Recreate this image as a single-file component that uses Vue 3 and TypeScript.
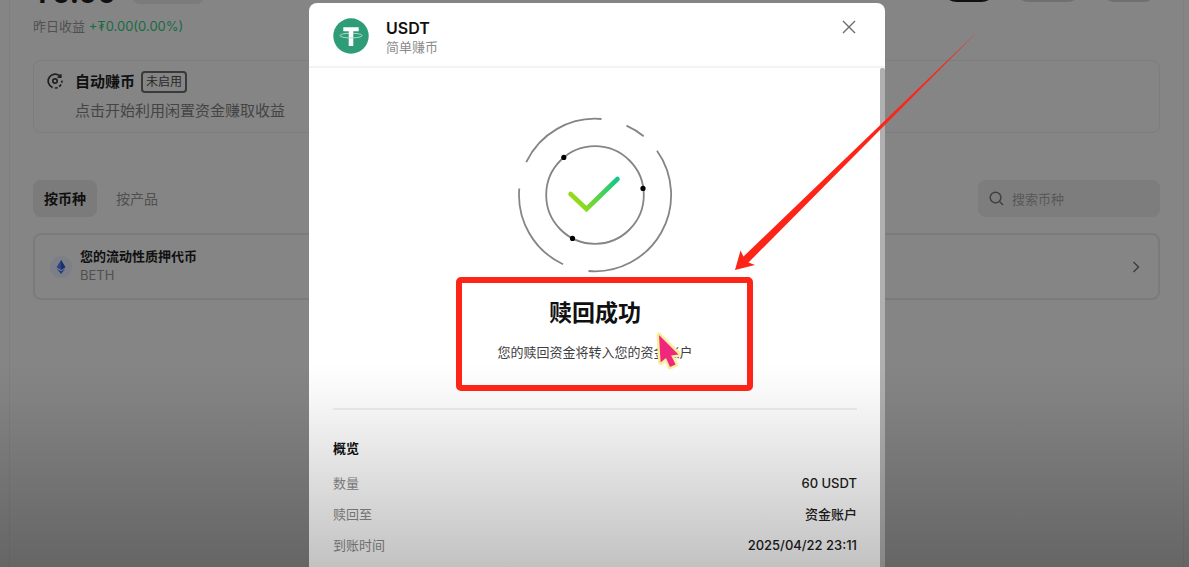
<script setup lang="ts">
import { ref } from 'vue'

interface DetailRow {
  label: string
  value: string
}

const keyword = ref('')
const activeTab = ref('coin')

const tabs = [
  { id: 'coin', label: '按币种' },
  { id: 'product', label: '按产品' },
]

const details: DetailRow[] = [
  { label: '数量', value: '60 USDT' },
  { label: '赎回至', value: '资金账户' },
  { label: '到账时间', value: '2025/04/22 23:11' },
]
</script>

<template>
  <div class="screen">
    <main class="page">
      <div class="balance">
        <strong class="amount">₮0.00</strong>
        <span class="unit"></span>
        <div class="actions">
          <button class="action primary" type="button" aria-label="申购"></button>
          <button class="action wide" type="button" aria-label="赎回"></button>
          <button class="action" type="button" aria-label="更多"></button>
        </div>
      </div>
      <p class="earned">昨日收益 <span class="gain">+₮0.00(0.00%)</span></p>

      <section class="card auto">
        <svg class="auto-icon" viewBox="0 0 16 16" aria-hidden="true">
          <path d="M13.4 3.4A7 7 0 1 0 5.6 14.6" />
          <path d="M7.8 15A7 7 0 0 0 14.9 7.6" stroke-dasharray="3 1.6" />
          <path d="M10.6 4.2h3.2v-3" />
          <circle cx="8" cy="8" r="2.2" />
        </svg>
        <div>
          <div class="auto-head">
            <h2>自动赚币</h2>
            <span class="badge">未启用</span>
          </div>
          <p class="auto-text">点击开始利用闲置资金赚取收益</p>
        </div>
      </section>

      <div class="toolbar">
        <div class="tabs">
          <button
            v-for="tab in tabs"
            :key="tab.id"
            type="button"
            class="tab"
            :class="{ active: tab.id === activeTab }"
            @click="activeTab = tab.id"
          >
            {{ tab.label }}
          </button>
        </div>
        <label class="search">
          <svg viewBox="0 0 16 16" aria-hidden="true">
            <circle cx="7" cy="7" r="5.7" />
            <path d="M11.2 11.2L15 15" />
          </svg>
          <input v-model="keyword" type="text" placeholder="搜索币种" aria-label="搜索币种" />
        </label>
      </div>

      <section class="card token">
        <svg class="eth" viewBox="0 0 24 24" aria-hidden="true">
          <circle cx="12" cy="12" r="11" fill="#7c7f86" />
          <path d="M12 5L16.4 12.3L12 15L7.6 12.3Z" fill="#2a4586" />
          <path d="M12 5L16.4 12.3L12 15Z" fill="#1b2f6b" />
          <path d="M7.8 13.7L12 16.2L16.2 13.7L12 19Z" fill="#1f3c86" />
        </svg>
        <div class="token-name">
          <h3>您的流动性质押代币</h3>
          <p>BETH</p>
        </div>
        <svg class="chevron" viewBox="0 0 8 12" aria-hidden="true">
          <path d="M1.5 1L6.5 6L1.5 11" />
        </svg>
      </section>
    </main>

    <div class="overlay">
      <section class="modal" role="dialog" aria-labelledby="modal-title">
        <header class="modal-head">
          <svg class="usdt" viewBox="0 0 36 36" aria-hidden="true">
            <circle cx="18" cy="18" r="17.7" fill="#2f9c78" />
            <path d="M10.3 9.3H25.7V13.3H20.3V28H15.7V13.3H10.3Z" fill="#fff" />
            <path
              d="M15.7 15.4C10.6 15.5 7 16.4 7 17.6C7 18.9 11.8 19.9 18 19.9S29 18.9 29 17.6C29 16.4 25.4 15.5 20.3 15.4"
              fill="none"
              stroke="#b5ddd0"
              stroke-width="1"
            />
          </svg>
          <div class="coin">
            <h1 id="modal-title">USDT</h1>
            <p>简单赚币</p>
          </div>
          <button class="close" type="button" aria-label="关闭">
            <svg viewBox="0 0 14 14" aria-hidden="true">
              <path d="M1 1L13 13M13 1L1 13" />
            </svg>
          </button>
        </header>

        <div class="modal-body">
          <div class="content">
            <svg class="success" viewBox="0 0 156 156" aria-hidden="true">
              <defs>
                <linearGradient id="tick" gradientUnits="userSpaceOnUse" x1="60" y1="92" x2="102" y2="62">
                  <stop offset="0" stop-color="#a0dc10" />
                  <stop offset="0.5" stop-color="#4fd44c" />
                  <stop offset="1" stop-color="#10c68c" />
                </linearGradient>
              </defs>
              <g fill="none" stroke="#858585" stroke-width="1.8">
                <path d="M9.2 45.2A76.3 76.3 0 0 1 84.5 2" />
                <path d="M109.5 8.6A76.3 76.3 0 0 1 126.7 19.3" />
                <path d="M140 33.7A76.3 76.3 0 0 1 71.5 154" />
                <path d="M46 147.2A76.3 76.3 0 0 1 2.3 71.5" />
                <circle cx="78" cy="78" r="48.8" />
              </g>
              <circle cx="46.8" cy="40.4" r="2.6" />
              <circle cx="126" cy="71.4" r="2.6" />
              <circle cx="55.5" cy="121.4" r="2.6" />
              <path
                d="M53.5 77L69.5 92L100.5 62"
                fill="none"
                stroke="url(#tick)"
                stroke-width="4.6"
                stroke-linecap="round"
              />
            </svg>
            <h2 class="result">赎回成功</h2>
            <p class="note">您的赎回资金将转入您的资金账户</p>
            <hr />
            <h3 class="overview">概览</h3>
            <dl class="details">
              <div v-for="row in details" :key="row.label" class="detail">
                <dt>{{ row.label }}</dt>
                <dd>{{ row.value }}</dd>
              </div>
            </dl>
          </div>
          <div class="scrollbar"></div>
        </div>
      </section>
    </div>

    <div class="shade"></div>

    <div class="overlay marks">
      <div class="mark-area">
        <div class="frame"></div>
        <svg class="arrow" viewBox="0 0 244 240" aria-hidden="true">
          <path d="M1 238L6.5 218.5L9.5 224.5L243 0L14.5 230.5L21 233Z" fill="#fc2517" />
        </svg>
        <svg class="cursor" viewBox="0 0 32 44" aria-hidden="true">
          <path
            d="M7 6L8.6 33.5L14 29L18 38L23.6 35.5L19.2 26.5L26.5 25.5Z"
            fill="#f0287c"
            stroke="#f8f0a0"
            stroke-width="5"
            stroke-linejoin="round"
            paint-order="stroke"
          />
        </svg>
      </div>
    </div>
  </div>
</template>

<style>
body {
  margin: 0;
  background: #858585;
}
</style>

<style scoped>
.screen {
  position: relative;
  height: 100vh;
  overflow: hidden;
  background: #858585;
  color: #101010;
  font-family: Inter, "Noto Sans CJK SC", sans-serif;
  font-size: 13px;
  line-height: 20px;
}

h1,
h2,
h3,
p,
dl,
dd {
  margin: 0;
}

button {
  padding: 0;
  border: 0;
  background: none;
  font: inherit;
  color: inherit;
}

.page {
  box-sizing: border-box;
  height: 100%;
  margin: 0 5px 0 9px;
  padding: 0 23px;
  border: solid #7f7f7f;
  border-width: 0 1px;
}

.balance {
  display: flex;
  align-items: flex-end;
  height: 4px;
  margin-bottom: 12px;
}

.amount {
  font-size: 28px;
  line-height: 22px;
  font-weight: 700;
}

.unit {
  width: 72px;
  height: 24px;
  margin-left: 16px;
  border-radius: 8px;
  background: #7b7b7b;
}

.actions {
  display: flex;
  gap: 16px;
  margin: 0 1px 2px auto;
}

.action {
  width: 60px;
  height: 32px;
  border-radius: 16px;
  background: #707070;
}

.action.primary {
  width: 56px;
  background: #101010;
}

.action.wide {
  width: 70px;
}

.earned {
  color: #505050;
}

.gain {
  color: #176b45;
}

.card {
  display: flex;
  box-sizing: border-box;
  border: 1px solid #7d7d7d;
  border-radius: 8px;
}

.auto {
  height: 73px;
  margin-top: 24px;
  padding: 8px 13px;
  gap: 12px;
}

.auto-icon {
  width: 16px;
  height: 16px;
  margin-top: 4px;
  fill: none;
  stroke: #202020;
  stroke-width: 1.7;
}

.auto-head {
  display: flex;
  align-items: center;
  gap: 6px;
  height: 26px;
}

.auto-head h2 {
  font-size: 15px;
  font-weight: 700;
}

.badge {
  padding: 0 3px;
  border: 2px solid #3a3a3a;
  border-radius: 4px;
  color: #282828;
  font-size: 12px;
  line-height: 18px;
}

.auto-text {
  margin-top: 4px;
  color: #444;
  font-size: 15px;
  line-height: 24px;
}

.toolbar {
  display: flex;
  justify-content: space-between;
  margin: 47px 0 16px;
}

.tabs {
  display: flex;
  gap: 8px;
}

.tab {
  height: 37px;
  padding: 0 11px;
  border-radius: 8px;
  color: #505050;
  font-size: 14px;
}

.tab.active {
  background: #7b7b7b;
  color: #101010;
  font-weight: 700;
}

.search {
  display: flex;
  align-items: center;
  gap: 8px;
  box-sizing: border-box;
  width: 182px;
  height: 37px;
  padding: 0 11px;
  border-radius: 8px;
  background: #7d7d7d;
}

.search svg {
  flex: none;
  width: 15px;
  height: 15px;
  fill: none;
  stroke: #404040;
  stroke-width: 1.6;
}

.search input {
  flex: 1;
  min-width: 0;
  padding: 0;
  border: 0;
  outline: 0;
  background: none;
  color: #202020;
  font: inherit;
}

.search input::placeholder {
  color: #585858;
  opacity: 1;
}

.token {
  align-items: center;
  height: 67px;
  padding: 0 18px 0 14px;
  border: 2px solid #7b7b7b;
}

.eth {
  width: 24px;
  height: 24px;
}

.token-name {
  flex: 1;
  margin: 0 0 3px 7px;
}

.token-name h3 {
  font-size: 13px;
  font-weight: 700;
}

.token-name p {
  color: #505050;
  line-height: 18px;
}

.chevron {
  width: 8px;
  height: 12px;
  fill: none;
  stroke: #3c3c3c;
  stroke-width: 1.4;
}

.overlay {
  position: absolute;
  inset: 0;
  display: flex;
  justify-content: center;
  padding: 3px 0 0 5px;
}

.modal {
  display: flex;
  flex-direction: column;
  width: 576px;
  overflow: hidden;
  border-radius: 8px 8px 0 0;
  background: #fff;
}

.modal-head {
  display: flex;
  align-items: center;
  box-sizing: border-box;
  height: 65px;
  padding: 0 29px 0 24px;
  border-bottom: 2px solid #f3f3f3;
}

.usdt {
  width: 36px;
  height: 36px;
  margin-top: 3px;
}

.coin {
  flex: 1;
  margin: 5px 0 0 17px;
}

.coin h1 {
  font-size: 16px;
  font-weight: 600;
  line-height: 20px;
}

.coin p {
  color: #8c8c8c;
  line-height: 18px;
}

.close {
  align-self: flex-start;
  width: 14px;
  height: 14px;
  margin-top: 17px;
}

.close svg {
  display: block;
  width: 14px;
  height: 14px;
  fill: none;
  stroke: #6b6b6b;
  stroke-width: 1.4;
}

.modal-body {
  display: flex;
  flex: 1;
}

.content {
  flex: 1;
  padding: 49px 23px 0 24px;
}

.scrollbar {
  width: 5px;
  background: #b0b0b0;
  border-radius: 2px 2px 0 0;
}

.success {
  display: block;
  width: 156px;
  height: 156px;
  margin: 0 auto;
}

.result {
  margin-top: 24px;
  font-size: 23px;
  font-weight: 700;
  line-height: 32px;
  text-align: center;
}

.note {
  margin-top: 13px;
  color: #404040;
  text-align: center;
}

hr {
  height: 2px;
  margin: 46px 0 0;
  border: 0;
  background: #efefef;
}

.overview {
  margin-top: 28px;
  font-size: 13px;
  font-weight: 700;
}

.details {
  display: flex;
  flex-direction: column;
  gap: 11px;
  margin-top: 15px;
}

.detail {
  display: flex;
  justify-content: space-between;
}

.detail dt {
  color: #8c8c8c;
}

.detail dd {
  color: #202020;
  font-weight: 500;
}

.shade {
  position: absolute;
  inset: auto 0 0;
  height: 36%;
  background: linear-gradient(transparent, rgba(0, 0, 0, 0.03) 17%, rgba(0, 0, 0, 0.24));
  pointer-events: none;
}

.marks {
  pointer-events: none;
}

.mark-area {
  position: relative;
  width: 576px;
}

.frame {
  position: absolute;
  top: 274px;
  left: 147px;
  box-sizing: border-box;
  width: 297px;
  height: 114px;
  border: 6px solid #fc2517;
  border-radius: 5px;
}

.arrow {
  position: absolute;
  top: 29px;
  left: 425px;
  width: 244px;
  height: 240px;
}

.cursor {
  position: absolute;
  top: 326px;
  left: 343px;
  width: 32px;
  height: 44px;
}
</style>
